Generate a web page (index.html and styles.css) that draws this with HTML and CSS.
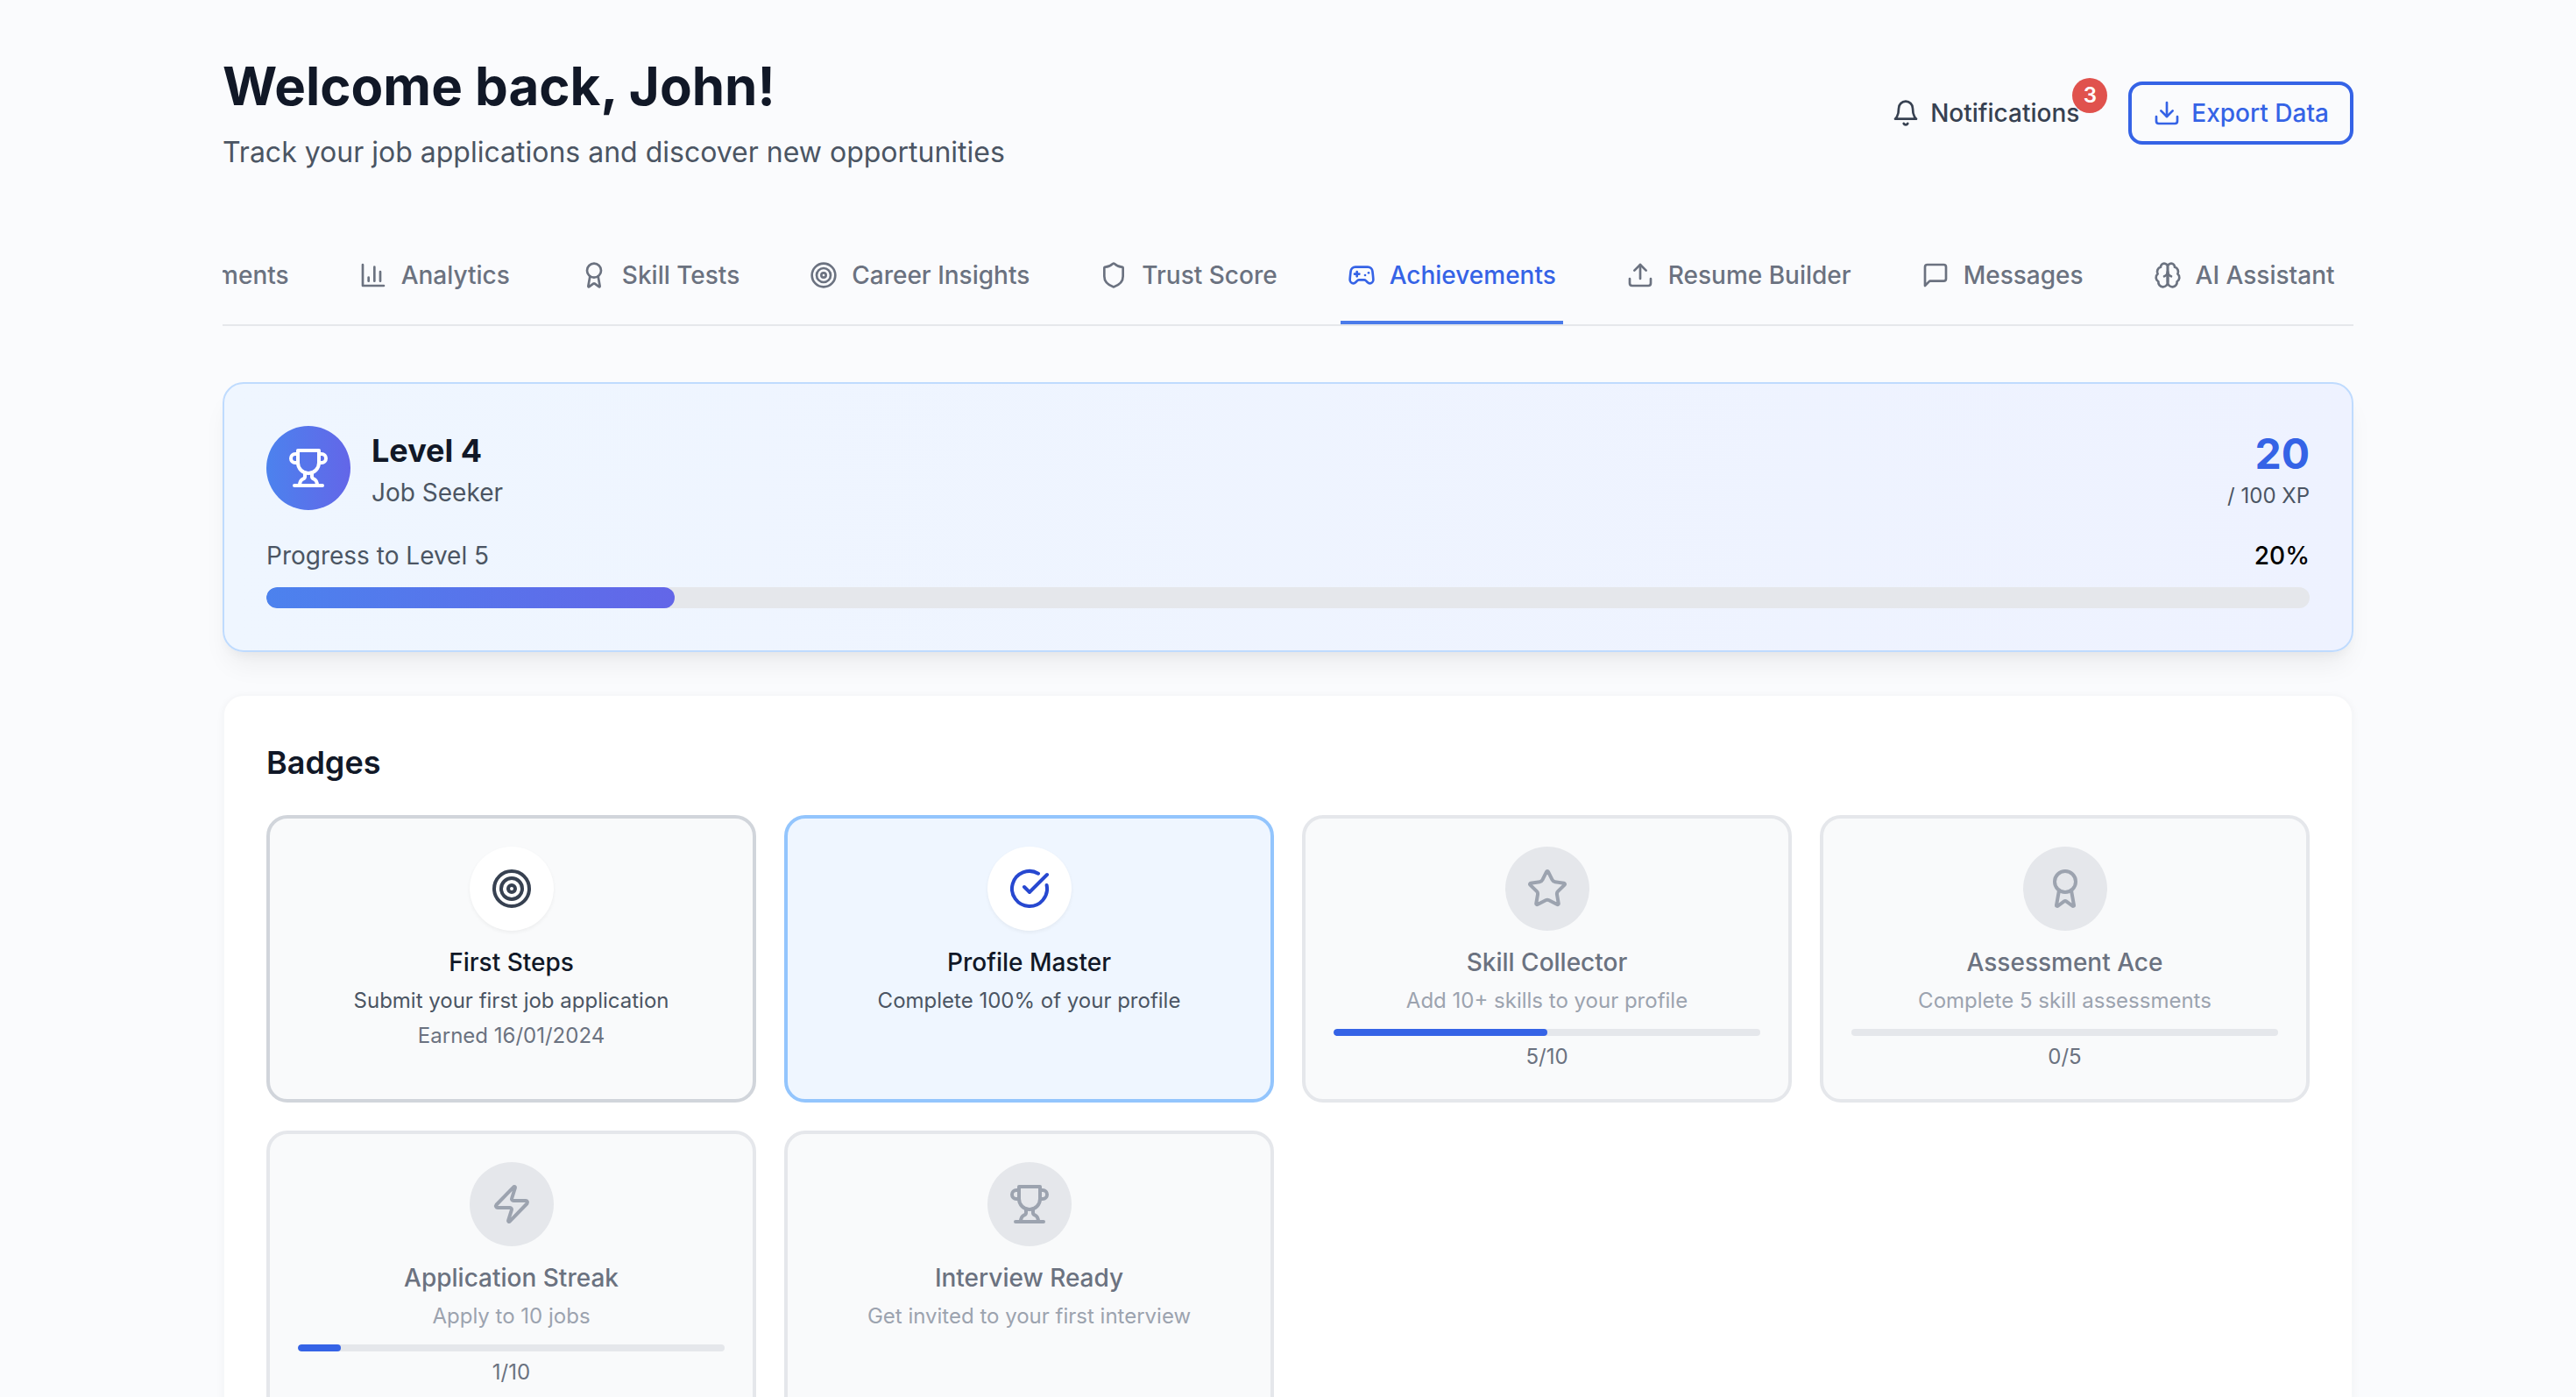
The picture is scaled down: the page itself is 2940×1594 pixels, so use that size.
FILE: index.html
```html
<!DOCTYPE html>
<html lang="en">
<head>
    <meta charset="UTF-8">
    <title>Dashboard - Achievements</title>
    <link rel="stylesheet" href="styles.css">
</head>
<body>
<svg class="sprite" xmlns="http://www.w3.org/2000/svg">
    <symbol id="i-bell" viewBox="0 0 24 24"><path d="M6 8a6 6 0 0 1 12 0c0 7 3 9 3 9H3s3-2 3-9"/><path d="M10.3 21a1.94 1.94 0 0 0 3.4 0"/></symbol>
    <symbol id="i-download" viewBox="0 0 24 24"><path d="M21 15v4a2 2 0 0 1-2 2H5a2 2 0 0 1-2-2v-4"/><polyline points="7 10 12 15 17 10"/><line x1="12" y1="15" x2="12" y2="3"/></symbol>
    <symbol id="i-upload" viewBox="0 0 24 24"><path d="M21 15v4a2 2 0 0 1-2 2H5a2 2 0 0 1-2-2v-4"/><polyline points="17 8 12 3 7 8"/><line x1="12" y1="3" x2="12" y2="15"/></symbol>
    <symbol id="i-chart" viewBox="0 0 24 24"><path d="M3 3v18h18"/><path d="M18 17V9"/><path d="M13 17V5"/><path d="M8 17v-3"/></symbol>
    <symbol id="i-award" viewBox="0 0 24 24"><path d="m15.477 12.89 1.515 8.526a.5.5 0 0 1-.81.47l-3.58-2.687a1 1 0 0 0-1.197 0l-3.586 2.686a.5.5 0 0 1-.81-.469l1.514-8.526"/><circle cx="12" cy="8" r="6"/></symbol>
    <symbol id="i-target" viewBox="0 0 24 24"><circle cx="12" cy="12" r="10"/><circle cx="12" cy="12" r="6"/><circle cx="12" cy="12" r="2"/></symbol>
    <symbol id="i-shield" viewBox="0 0 24 24"><path d="M20 13c0 5-3.5 7.5-7.66 8.95a1 1 0 0 1-.67-.01C7.5 20.5 4 18 4 13V6a1 1 0 0 1 1-1c2 0 4.5-1.2 6.24-2.72a1.17 1.17 0 0 1 1.52 0C14.51 3.81 17 5 19 5a1 1 0 0 1 1 1z"/></symbol>
    <symbol id="i-gamepad" viewBox="0 0 24 24"><line x1="6" y1="11" x2="10" y2="11"/><line x1="8" y1="9" x2="8" y2="13"/><line x1="15" y1="12" x2="15.01" y2="12"/><line x1="18" y1="10" x2="18.01" y2="10"/><path d="M17.32 5H6.68a4 4 0 0 0-3.978 3.59c-.006.052-.01.101-.017.152C2.604 9.416 2 14.456 2 16a3 3 0 0 0 3 3c1 0 1.5-.5 2-1l1.414-1.414A2 2 0 0 1 9.828 16h4.344a2 2 0 0 1 1.414.586L17 18c.5.5 1 1 2 1a3 3 0 0 0 3-3c0-1.545-.604-6.584-.685-7.258-.007-.05-.011-.1-.017-.151A4 4 0 0 0 17.32 5z"/></symbol>
    <symbol id="i-message" viewBox="0 0 24 24"><path d="M21 15a2 2 0 0 1-2 2H7l-4 4V5a2 2 0 0 1 2-2h14a2 2 0 0 1 2 2z"/></symbol>
    <symbol id="i-brain" viewBox="0 0 24 24"><path d="M12 5a3 3 0 1 0-5.997.125 4 4 0 0 0-2.526 5.77 4 4 0 0 0 .556 6.588A4 4 0 1 0 12 18Z"/><path d="M12 5a3 3 0 1 1 5.997.125 4 4 0 0 1 2.526 5.77 4 4 0 0 1-.556 6.588A4 4 0 1 1 12 18Z"/><path d="M15 13a4.5 4.5 0 0 1-3-4 4.5 4.5 0 0 1-3 4"/><path d="M12 18V9"/></symbol>
    <symbol id="i-trophy" viewBox="0 0 24 24"><path d="M6 9H4.5a2.5 2.5 0 0 1 0-5H6"/><path d="M18 9h1.5a2.5 2.5 0 0 0 0-5H18"/><path d="M4 22h16"/><path d="M10 14.66V17c0 .55-.47.98-.97 1.21C7.85 18.75 7 20.24 7 22"/><path d="M14 14.66V17c0 .55.47.98.97 1.21C16.15 18.75 17 20.24 17 22"/><path d="M18 2H6v7a6 6 0 0 0 12 0V2Z"/></symbol>
    <symbol id="i-check" viewBox="0 0 24 24"><path d="M21.801 10A10 10 0 1 1 17 3.335"/><path d="m9 11 3 3L22 4"/></symbol>
    <symbol id="i-star" viewBox="0 0 24 24"><path d="M11.525 2.295a.53.53 0 0 1 .95 0l2.31 4.679a2.123 2.123 0 0 0 1.595 1.16l5.166.756a.53.53 0 0 1 .294.904l-3.736 3.638a2.123 2.123 0 0 0-.611 1.878l.882 5.14a.53.53 0 0 1-.771.56l-4.618-2.428a2.122 2.122 0 0 0-1.973 0L6.396 21.01a.53.53 0 0 1-.77-.56l.881-5.139a2.122 2.122 0 0 0-.611-1.879L2.16 9.795a.53.53 0 0 1 .294-.906l5.165-.755a2.122 2.122 0 0 0 1.597-1.16z"/></symbol>
    <symbol id="i-zap" viewBox="0 0 24 24"><path d="M4 14a1 1 0 0 1-.78-1.63l9.9-10.2a.5.5 0 0 1 .86.46l-1.92 6.02A1 1 0 0 0 13 10h7a1 1 0 0 1 .78 1.63l-9.9 10.2a.5.5 0 0 1-.86-.46l1.92-6.02A1 1 0 0 0 11 14z"/></symbol>
</svg>

<main class="page">
    <header class="top">
        <div>
            <h1 class="welcome">Welcome back, John!</h1>
            <p class="tagline">Track your job applications and discover new opportunities</p>
        </div>
        <div class="top-actions">
            <button class="btn btn-ghost">
                <svg class="icon"><use href="#i-bell"/></svg>
                Notifications
                <span class="count">3</span>
            </button>
            <button class="btn btn-outline">
                <svg class="icon"><use href="#i-download"/></svg>
                Export Data
            </button>
        </div>
    </header>

    <nav class="tabs">
        <a class="tab"><svg class="icon"><use href="#i-award"/></svg>Assessments</a>
        <a class="tab"><svg class="icon"><use href="#i-chart"/></svg>Analytics</a>
        <a class="tab"><svg class="icon"><use href="#i-award"/></svg>Skill Tests</a>
        <a class="tab"><svg class="icon"><use href="#i-target"/></svg>Career Insights</a>
        <a class="tab"><svg class="icon"><use href="#i-shield"/></svg>Trust Score</a>
        <a class="tab active"><svg class="icon"><use href="#i-gamepad"/></svg>Achievements</a>
        <a class="tab"><svg class="icon"><use href="#i-upload"/></svg>Resume Builder</a>
        <a class="tab"><svg class="icon"><use href="#i-message"/></svg>Messages</a>
        <a class="tab"><svg class="icon"><use href="#i-brain"/></svg>AI Assistant</a>
    </nav>

    <section class="level-card">
        <div class="level-head">
            <div class="level-who">
                <div class="level-icon"><svg class="icon-lg"><use href="#i-trophy"/></svg></div>
                <div>
                    <div class="level-name">Level 4</div>
                    <div class="level-rank">Job Seeker</div>
                </div>
            </div>
            <div class="level-xp">
                <div class="xp-now">20</div>
                <div class="xp-max">/ 100 XP</div>
            </div>
        </div>
        <div class="level-progress">
            <span>Progress to Level 5</span>
            <span class="level-pct">20%</span>
        </div>
        <div class="level-track"><div class="level-fill" style="width: 20%"></div></div>
    </section>

    <section class="badges-card">
        <h2 class="badges-title">Badges</h2>
        <div class="badges">
            <div class="badge earned">
                <div class="badge-icon icon-dark"><svg class="icon-lg"><use href="#i-target"/></svg></div>
                <h3 class="badge-name">First Steps</h3>
                <p class="badge-desc">Submit your first job application</p>
                <p class="badge-date">Earned 16/01/2024</p>
            </div>
            <div class="badge earned-blue">
                <div class="badge-icon icon-blue"><svg class="icon-lg"><use href="#i-check"/></svg></div>
                <h3 class="badge-name">Profile Master</h3>
                <p class="badge-desc">Complete 100% of your profile</p>
            </div>
            <div class="badge locked">
                <div class="badge-icon"><svg class="icon-lg"><use href="#i-star"/></svg></div>
                <h3 class="badge-name">Skill Collector</h3>
                <p class="badge-desc">Add 10+ skills to your profile</p>
                <div class="badge-track"><div class="badge-fill" style="width: 50%"></div></div>
                <p class="badge-count">5/10</p>
            </div>
            <div class="badge locked">
                <div class="badge-icon"><svg class="icon-lg"><use href="#i-award"/></svg></div>
                <h3 class="badge-name">Assessment Ace</h3>
                <p class="badge-desc">Complete 5 skill assessments</p>
                <div class="badge-track"><div class="badge-fill" style="width: 0%"></div></div>
                <p class="badge-count">0/5</p>
            </div>
            <div class="badge locked">
                <div class="badge-icon"><svg class="icon-lg"><use href="#i-zap"/></svg></div>
                <h3 class="badge-name">Application Streak</h3>
                <p class="badge-desc">Apply to 10 jobs</p>
                <div class="badge-track"><div class="badge-fill" style="width: 10%"></div></div>
                <p class="badge-count">1/10</p>
            </div>
            <div class="badge locked">
                <div class="badge-icon"><svg class="icon-lg"><use href="#i-trophy"/></svg></div>
                <h3 class="badge-name">Interview Ready</h3>
                <p class="badge-desc">Get invited to your first interview</p>
            </div>
        </div>
    </section>
</main>
</body>
</html>
```

FILE: styles.css
```css
* {
    box-sizing: border-box;
}

html, body {
    margin: 0;
    height: 100%;
    overflow: hidden;
    background: #fafbfd;
    color: #111827;
    font-family: Inter, sans-serif;
}

h1, h2, h3, p {
    margin: 0;
}

.sprite {
    display: none;
}

.icon, .icon-lg {
    fill: none;
    stroke: currentColor;
    stroke-width: 2;
    stroke-linecap: round;
    stroke-linejoin: round;
    flex-shrink: 0;
}

.icon {
    width: 32px;
    height: 32px;
}

.icon-lg {
    width: 48px;
    height: 48px;
}

.page {
    width: 2432px;
    margin: 0 auto;
    padding-top: 62px;
}

/* header */
.top {
    display: flex;
    justify-content: space-between;
    align-items: center;
    margin-bottom: 60px;
}

.welcome {
    font-size: 60px;
    line-height: 72px;
    font-weight: 700;
    color: #111827;
}

.tagline {
    margin-top: 12px;
    font-size: 32px;
    line-height: 56px;
    color: #4b5563;
}

.top-actions {
    display: flex;
    gap: 32px;
    margin-top: -6px;
}

.btn {
    position: relative;
    display: flex;
    align-items: center;
    gap: 12px;
    height: 72px;
    padding: 0 24px;
    border: 0;
    border-radius: 16px;
    background: none;
    font-family: inherit;
    font-size: 28px;
    font-weight: 500;
}

.btn-ghost {
    color: #374151;
}

.btn-outline {
    border: 4px solid #3563e6;
    color: #3563e6;
    background: #fafbfd;
}

.count {
    position: absolute;
    top: -4px;
    right: -8px;
    width: 40px;
    height: 40px;
    border-radius: 50%;
    background: #e0524d;
    color: #fff;
    font-size: 24px;
    font-weight: 600;
    line-height: 40px;
    text-align: center;
}

/* tabs, scrolled all the way along so the first one is cut off */
.tabs {
    display: flex;
    justify-content: flex-end;
    gap: 64px;
    padding-right: 13.5px;
    overflow: hidden;
    border-bottom: 2px solid #e5e7eb;
}

.tab {
    display: flex;
    align-items: center;
    flex-shrink: 0;
    gap: 16px;
    padding: 32px 8px;
    border-bottom: 4px solid transparent;
    color: #6b7280;
    font-size: 28px;
    line-height: 40px;
    font-weight: 500;
    white-space: nowrap;
}

.tab.active {
    border-bottom-color: #4a7bea;
    color: #3563e6;
}

/* level */
.level-card {
    margin-top: 64px;
    padding: 48px;
    border: 2px solid #bfdbfe;
    border-radius: 24px;
    background: linear-gradient(to right, #eff6ff, #eef2ff);
    box-shadow: 0 20px 30px -6px rgba(0, 0, 0, .06), 0 8px 12px -4px rgba(0, 0, 0, .04);
}

.level-head {
    display: flex;
    justify-content: space-between;
    align-items: center;
}

.level-who {
    display: flex;
    align-items: center;
    gap: 24px;
}

.level-icon {
    display: flex;
    align-items: center;
    justify-content: center;
    width: 96px;
    height: 96px;
    border-radius: 50%;
    background: linear-gradient(to right, #4c82ee, #6366e8);
    color: #fff;
}

.level-name {
    font-size: 36px;
    line-height: 56px;
    font-weight: 700;
}

.level-rank {
    font-size: 28px;
    line-height: 40px;
    color: #4b5563;
}

.level-xp {
    text-align: right;
}

.xp-now {
    font-size: 48px;
    line-height: 64px;
    font-weight: 700;
    color: #3563e6;
}

.xp-max {
    font-size: 24px;
    line-height: 32px;
    color: #4b5563;
}

.level-progress {
    display: flex;
    justify-content: space-between;
    margin-top: 32px;
    font-size: 28px;
    line-height: 40px;
    color: #4b5563;
}

.level-pct {
    color: #000;
    font-weight: 500;
}

.level-track {
    height: 24px;
    margin-top: 16px;
    border-radius: 12px;
    background: #e5e7eb;
    overflow: hidden;
}

.level-fill {
    height: 100%;
    border-radius: 12px;
    background: linear-gradient(to right, #4c82ee, #6366e8);
}

/* badges */
.badges-card {
    margin-top: 48px;
    padding: 48px;
    border: 2px solid #f6f7f9;
    border-radius: 24px;
    background: #fff;
    box-shadow: 0 2px 8px rgba(0, 0, 0, .04);
}

.badges-title {
    margin-bottom: 32px;
    font-size: 36px;
    line-height: 56px;
    font-weight: 600;
}

.badges {
    display: grid;
    grid-template-columns: repeat(4, 1fr);
    gap: 32px;
}

.badge {
    padding: 32px;
    border: 4px solid #e5e7eb;
    border-radius: 24px;
    background: #f9fafb;
    text-align: center;
}

.badge.earned {
    border-color: #d1d5db;
}

.badge.earned-blue {
    border-color: #93c5fd;
    background: #eff6ff;
}

.badge-icon {
    display: flex;
    align-items: center;
    justify-content: center;
    width: 96px;
    height: 96px;
    margin: 0 auto 16px;
    border-radius: 50%;
    background: #fff;
    box-shadow: 0 2px 4px rgba(0, 0, 0, .05);
}

.icon-dark {
    color: #374151;
}

.icon-blue {
    color: #2748d0;
}

.locked .badge-icon {
    background: #e5e7eb;
    color: #9ca3af;
    box-shadow: none;
}

.badge-name {
    font-size: 28px;
    line-height: 40px;
    font-weight: 500;
}

.badge-desc {
    margin-top: 8px;
    font-size: 24px;
    line-height: 32px;
    color: #4b5563;
}

.badge-date {
    margin-top: 8px;
    font-size: 24px;
    line-height: 32px;
    color: #6b7280;
}

.locked .badge-name {
    color: #6b7280;
}

.locked .badge-desc {
    color: #9ca3af;
}

.badge-track {
    height: 8px;
    margin-top: 16px;
    border-radius: 4px;
    background: #e5e7eb;
    overflow: hidden;
}

.badge-fill {
    height: 100%;
    border-radius: 4px;
    background: #3563e6;
}

.badge-count {
    margin-top: 8px;
    font-size: 24px;
    line-height: 32px;
    color: #6b7280;
}
```
